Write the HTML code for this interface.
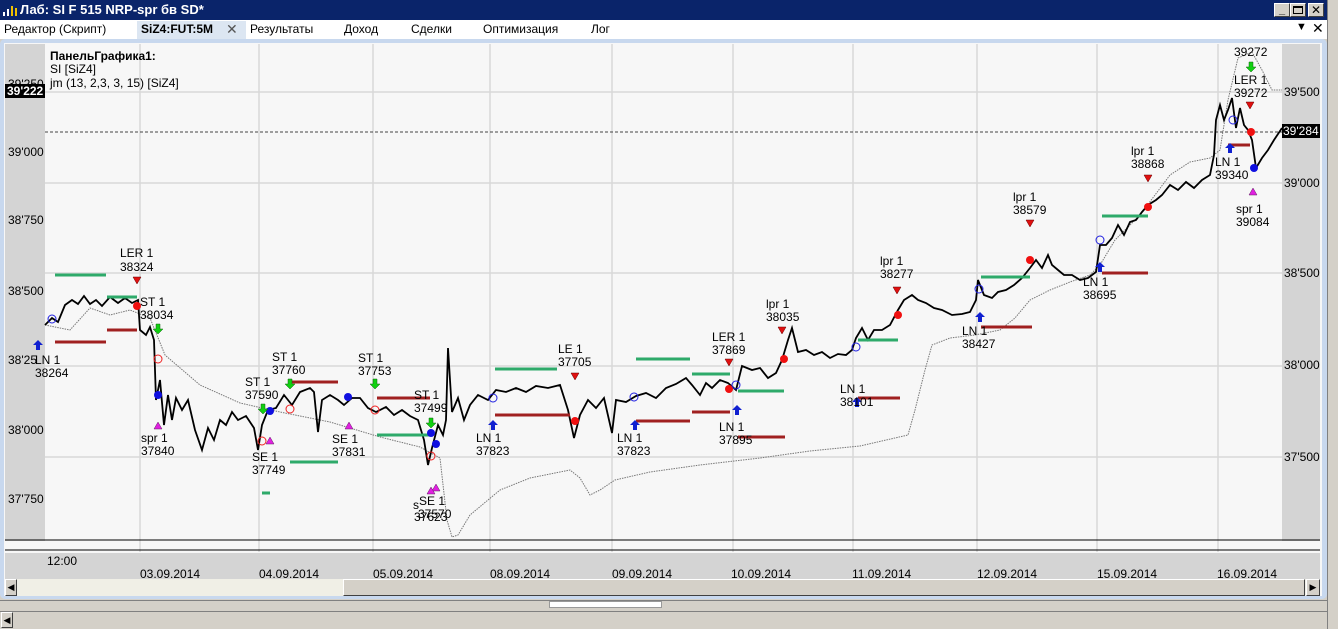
<!DOCTYPE html>
<html><head><meta charset="utf-8"><style>
*{margin:0;padding:0;box-sizing:border-box}
body{width:1338px;height:629px;overflow:hidden;background:#d4d0c8;font-family:"Liberation Sans","DejaVu Sans",sans-serif;font-size:12px;position:relative}
.ab{position:absolute}
</style></head><body>
<div class="ab" style="left:0;top:0;width:1338px;height:20px;background:#0a246a"></div>
<div class="ab" style="left:2px;top:3px;width:16px;height:14px">
<div class="ab" style="left:1px;top:9px;width:2px;height:4px;background:#fff"></div>
<div class="ab" style="left:5px;top:6px;width:2px;height:7px;background:#fff"></div>
<div class="ab" style="left:9px;top:3px;width:2px;height:10px;background:#f0c000"></div>
<div class="ab" style="left:13px;top:5px;width:2px;height:8px;background:#f0c000"></div></div>
<div class="ab" style="left:20px;top:2px;color:#fff;font-weight:bold;font-size:13px">Лаб: SI F 515 NRP-spr бв SD*</div>
<div class="ab" style="left:1274px;top:3px;width:16px;height:14px;background:#d4d0c8;border:1px solid #fff;border-right-color:#404040;border-bottom-color:#404040;font-size:11px;font-weight:bold;text-align:center;line-height:12px">_</div>
<div class="ab" style="left:1290px;top:3px;width:16px;height:14px;background:#d4d0c8;border:1px solid #fff;border-right-color:#404040;border-bottom-color:#404040"><div class="ab" style="left:2px;top:2px;width:10px;height:8px;border:1px solid #000;border-top-width:2px"></div></div>
<div class="ab" style="left:1308px;top:3px;width:16px;height:14px;background:#d4d0c8;border:1px solid #fff;border-right-color:#404040;border-bottom-color:#404040;font-size:12px;font-weight:bold;text-align:center;line-height:12px">✕</div>
<div class="ab" style="left:1327px;top:0;width:11px;height:629px;background:#d4d0c8;border-left:1px solid #808080"></div>
<div class="ab" style="left:0;top:20px;width:1327px;height:19px;background:#fff"></div>
<div class="ab" style="left:137px;top:21px;width:109px;height:18px;background:#dce6f2"></div>
<div class="ab" style="left:4px;top:22px;color:#000">Редактор (Скрипт)</div>
<div class="ab" style="left:141px;top:22px;font-weight:bold">SiZ4:FUT:5M</div>
<div class="ab" style="left:226px;top:21px;font-size:14px;color:#555">✕</div>
<div class="ab" style="left:250px;top:22px">Результаты</div>
<div class="ab" style="left:344px;top:22px">Доход</div>
<div class="ab" style="left:411px;top:22px">Сделки</div>
<div class="ab" style="left:483px;top:22px">Оптимизация</div>
<div class="ab" style="left:591px;top:22px">Лог</div>
<div class="ab" style="left:1296px;top:21px;font-size:11px">▼</div>
<div class="ab" style="left:1312px;top:20px;font-size:14px">✕</div>
<div class="ab" style="left:0;top:39px;width:1327px;height:560px;background:#c8d8ee;border-radius:5px"></div>
<div class="ab" style="left:4px;top:43px;width:1318px;height:553px;background:#f7f7f7"></div>
<svg class="ab" style="left:0;top:0" width="1338" height="629" font-family="Liberation Sans, sans-serif" font-size="12">
<rect x="5" y="44" width="40" height="497" fill="#d4d4d4"/>
<rect x="1282" y="44" width="38" height="497" fill="#d4d4d4"/>
<g stroke="#d8d8d8" stroke-width="1.5">
<line x1="45" y1="92" x2="1282" y2="92"/><line x1="45" y1="183" x2="1282" y2="183"/><line x1="45" y1="273" x2="1282" y2="273"/><line x1="45" y1="366" x2="1282" y2="366"/><line x1="45" y1="457" x2="1282" y2="457"/>
<line x1="140" y1="44" x2="140" y2="552"/><line x1="259" y1="44" x2="259" y2="552"/><line x1="373" y1="44" x2="373" y2="552"/><line x1="490" y1="44" x2="490" y2="552"/><line x1="612" y1="44" x2="612" y2="552"/><line x1="733" y1="44" x2="733" y2="552"/><line x1="853" y1="44" x2="853" y2="552"/><line x1="977" y1="44" x2="977" y2="552"/><line x1="1097" y1="44" x2="1097" y2="552"/><line x1="1218" y1="44" x2="1218" y2="552"/>
</g>
<line x1="45" y1="132" x2="1282" y2="132" stroke="#444" stroke-dasharray="3,2"/>
<line x1="5" y1="540" x2="1320" y2="540" stroke="#000"/>
<line x1="5" y1="550" x2="1320" y2="550" stroke="#000"/>
<rect x="5" y="553" width="1315" height="26" fill="#d4d4d4"/>
<g fill="#000">
<text x="8" y="88">39'250</text><text x="8" y="156">39'000</text><text x="8" y="224">38'750</text><text x="8" y="295">38'500</text><text x="8" y="364">38'25</text><text x="8" y="434">38'000</text><text x="8" y="503">37'750</text>
<text x="1284" y="96">39'500</text><text x="1284" y="187">39'000</text><text x="1284" y="277">38'500</text><text x="1284" y="369">38'000</text><text x="1284" y="461">37'500</text>
</g>
<rect x="5" y="84" width="40" height="14" fill="#000"/><text x="7" y="95" fill="#fff" font-weight="bold">39'222</text>
<rect x="1282" y="124" width="38" height="14" fill="#000"/><text x="1283" y="135" fill="#fff">39'284</text>
<text x="50" y="60" font-weight="bold">ПанельГрафика1:</text>
<text x="50" y="73">SI [SiZ4]</text>
<text x="50" y="87">jm (13, 2,3, 3, 15) [SiZ4]</text>
<polyline fill="none" stroke="#777" stroke-dasharray="1.5,1" points="45,325 70,330 90,308 110,315 130,310 150,318 165,355 200,385 240,403 280,412 330,422 380,437 420,447 440,458 447,520 452,537 458,535 470,515 500,490 530,478 570,470 580,478 590,495 600,490 615,480 650,472 700,465 760,458 810,451 860,446 908,435 915,410 925,370 932,345 950,338 975,335 1000,330 1015,318 1030,300 1050,290 1070,282 1090,275 1100,265 1115,240 1140,215 1170,175 1190,162 1210,158 1220,150 1228,100 1238,58 1252,52 1262,70 1272,90 1282,90"/>
<polyline fill="none" stroke="#000" stroke-width="1.8" points="45,325 52,318 58,322 65,305 72,300 78,304 84,296 90,304 96,300 102,306 110,297 118,303 125,298 132,303 138,300 140,330 146,335 150,327 154,340 156,400 160,380 164,425 168,395 172,420 176,398 182,410 188,400 195,430 202,450 208,428 214,440 220,420 226,425 232,412 238,420 246,416 254,428 258,450 262,425 268,410 276,408 284,395 292,405 300,392 310,388 314,392 318,432 322,400 330,395 338,400 344,405 352,398 360,398 368,408 376,412 386,407 394,415 402,410 410,416 418,420 424,440 428,465 432,448 438,425 443,435 446,420 448,348 452,412 458,398 464,420 470,405 478,395 488,400 496,390 506,392 516,388 526,392 536,386 548,388 560,385 568,410 574,438 580,415 588,400 596,408 604,398 612,433 616,400 626,402 636,396 646,393 656,398 666,388 676,384 686,378 692,385 700,395 706,383 712,388 720,380 728,383 736,390 742,366 752,370 760,368 768,378 776,373 782,360 788,340 792,328 798,352 806,350 814,355 822,352 830,358 838,354 846,355 852,350 856,338 862,328 868,340 874,330 882,330 890,325 898,310 904,300 912,295 918,300 926,303 934,308 942,310 952,315 962,314 970,312 976,300 978,280 984,295 992,298 998,292 1006,290 1014,285 1022,278 1030,268 1036,260 1042,268 1048,255 1052,265 1058,270 1064,275 1072,275 1080,280 1088,278 1096,272 1100,245 1106,245 1112,238 1118,225 1124,235 1130,222 1136,220 1142,212 1148,205 1156,200 1162,195 1170,185 1178,190 1186,182 1194,188 1202,180 1210,175 1214,155 1216,120 1220,105 1224,120 1228,110 1232,98 1236,128 1240,108 1244,125 1248,130 1252,140 1256,168 1262,158 1268,150 1274,140 1282,128"/>
<g stroke-width="3">
<g stroke="#2eaa6a"><line x1="55" y1="275" x2="106" y2="275"/><line x1="107" y1="297" x2="137" y2="297"/><line x1="290" y1="462" x2="338" y2="462"/><line x1="262" y1="493" x2="270" y2="493"/><line x1="377" y1="435" x2="430" y2="435"/><line x1="495" y1="369" x2="557" y2="369"/><line x1="636" y1="359" x2="690" y2="359"/><line x1="692" y1="374" x2="730" y2="374"/><line x1="738" y1="391" x2="784" y2="391"/><line x1="858" y1="340" x2="898" y2="340"/><line x1="981" y1="277" x2="1030" y2="277"/><line x1="1102" y1="216" x2="1148" y2="216"/></g>
<g stroke="#a02020"><line x1="55" y1="342" x2="106" y2="342"/><line x1="107" y1="330" x2="137" y2="330"/><line x1="290" y1="382" x2="338" y2="382"/><line x1="377" y1="398" x2="430" y2="398"/><line x1="495" y1="415" x2="570" y2="415"/><line x1="636" y1="421" x2="690" y2="421"/><line x1="692" y1="412" x2="730" y2="412"/><line x1="738" y1="437" x2="785" y2="437"/><line x1="858" y1="398" x2="900" y2="398"/><line x1="981" y1="327" x2="1032" y2="327"/><line x1="1102" y1="273" x2="1148" y2="273"/><line x1="1228" y1="145" x2="1250" y2="145"/></g>
</g>
<g fill="#1010e0"><circle cx="158" cy="395" r="4"/><circle cx="270" cy="411" r="4"/><circle cx="348" cy="397" r="4"/><circle cx="431" cy="433" r="4"/><circle cx="436" cy="444" r="4"/><circle cx="1254" cy="168" r="4"/></g>
<g fill="#f01010"><circle cx="137" cy="306" r="4"/><circle cx="575" cy="421" r="4"/><circle cx="729" cy="389" r="4"/><circle cx="784" cy="359" r="4"/><circle cx="898" cy="315" r="4"/><circle cx="1030" cy="260" r="4"/><circle cx="1148" cy="207" r="4"/><circle cx="1251" cy="132" r="4"/></g>
<g fill="none" stroke="#2020e0"><circle cx="52" cy="319" r="4"/><circle cx="493" cy="398" r="4"/><circle cx="634" cy="397" r="4"/><circle cx="736" cy="385" r="4"/><circle cx="856" cy="347" r="4"/><circle cx="979" cy="289" r="4"/><circle cx="1100" cy="240" r="4"/><circle cx="1233" cy="120" r="4"/></g>
<g fill="none" stroke="#f02020"><circle cx="158" cy="359" r="4"/><circle cx="290" cy="409" r="4"/><circle cx="375" cy="410" r="4"/><circle cx="262" cy="441" r="4"/><circle cx="431" cy="456" r="4"/></g>
<g fill="#1020d0"><path id="ua" d="M38,340 l5,5 h-3 v5 h-4 v-5 h-3z"/></g>
<g fill="#1020d0">
<use href="#ua" transform="translate(455,80)"/><use href="#ua" transform="translate(597,80)"/><use href="#ua" transform="translate(699,65)"/><use href="#ua" transform="translate(819,57)"/><use href="#ua" transform="translate(942,-28)"/><use href="#ua" transform="translate(1062,-78)"/><use href="#ua" transform="translate(1192,-197)"/></g>
<g fill="#10d010" stroke="#106010" stroke-width="0.5"><path id="da" d="M156,324 h4 v5 h3 l-5,5 l-5,-5 h3z"/>
<use href="#da" transform="translate(105,80)"/><use href="#da" transform="translate(132,55)"/><use href="#da" transform="translate(217,55)"/><use href="#da" transform="translate(273,94)"/><use href="#da" transform="translate(1093,-262)"/></g>
<g fill="#e01010" stroke="#600" stroke-width="0.5"><path id="rt" d="M133,277 h8 l-4,7z"/>
<use href="#rt" transform="translate(438,96)"/><use href="#rt" transform="translate(592,82)"/><use href="#rt" transform="translate(645,50)"/><use href="#rt" transform="translate(760,10)"/><use href="#rt" transform="translate(893,-57)"/><use href="#rt" transform="translate(1011,-102)"/><use href="#rt" transform="translate(1113,-175)"/></g>
<g fill="#e020e0" stroke="#602060" stroke-width="0.5"><path id="mt" d="M158,422 l4,7 h-8z"/>
<use href="#mt" transform="translate(112,15)"/><use href="#mt" transform="translate(191,0)"/><use href="#mt" transform="translate(278,62)"/><use href="#mt" transform="translate(273,65)"/><use href="#mt" transform="translate(1095,-234)"/></g>
<g fill="#000">
<text x="120" y="257">LER 1</text><text x="120" y="271">38324</text>
<text x="140" y="306">ST 1</text><text x="140" y="319">38034</text>
<text x="35" y="364">LN 1</text><text x="35" y="377">38264</text>
<text x="141" y="442">spr 1</text><text x="141" y="455">37840</text>
<text x="245" y="386">ST 1</text><text x="245" y="399">37590</text>
<text x="272" y="361">ST 1</text><text x="272" y="374">37760</text>
<text x="252" y="461">SE 1</text><text x="252" y="474">37749</text>
<text x="332" y="443">SE 1</text><text x="332" y="456">37831</text>
<text x="358" y="362">ST 1</text><text x="358" y="375">37753</text>
<text x="414" y="399">ST 1</text><text x="414" y="412">37499</text>
<text x="413" y="509">s</text><text x="414" y="521">37623</text>
<text x="419" y="505">SE 1</text><text x="418" y="518">37570</text>
<text x="476" y="442">LN 1</text><text x="476" y="455">37823</text>
<text x="558" y="353">LE 1</text><text x="558" y="366">37705</text>
<text x="617" y="442">LN 1</text><text x="617" y="455">37823</text>
<text x="712" y="341">LER 1</text><text x="712" y="354">37869</text>
<text x="719" y="431">LN 1</text><text x="719" y="444">37895</text>
<text x="766" y="308">lpr 1</text><text x="766" y="321">38035</text>
<text x="840" y="393">LN 1</text><text x="840" y="406">38101</text>
<text x="880" y="265">lpr 1</text><text x="880" y="278">38277</text>
<text x="1013" y="201">lpr 1</text><text x="1013" y="214">38579</text>
<text x="962" y="335">LN 1</text><text x="962" y="348">38427</text>
<text x="1083" y="286">LN 1</text><text x="1083" y="299">38695</text>
<text x="1131" y="155">lpr 1</text><text x="1131" y="168">38868</text>
<text x="1215" y="166">LN 1</text><text x="1215" y="179">39340</text>
<text x="1236" y="213">spr 1</text><text x="1236" y="226">39084</text>
<text x="1234" y="56">39272</text>
<text x="1234" y="84">LER 1</text><text x="1234" y="97">39272</text>
<text x="47" y="565">12:00</text>
<text x="140" y="578">03.09.2014</text><text x="259" y="578">04.09.2014</text><text x="373" y="578">05.09.2014</text><text x="490" y="578">08.09.2014</text><text x="612" y="578">09.09.2014</text><text x="731" y="578">10.09.2014</text><text x="852" y="578">11.09.2014</text><text x="977" y="578">12.09.2014</text><text x="1097" y="578">15.09.2014</text><text x="1217" y="578">16.09.2014</text>
</g>
</svg>
<div class="ab" style="left:5px;top:579px;width:1315px;height:17px;background:#f0efe6"></div>
<div class="ab" style="left:5px;top:579px;width:12px;height:17px;background:#d4d0c8;border:1px solid #fff;border-right-color:#404040;border-bottom-color:#404040;font-size:9px;line-height:14px;text-align:center">◀</div>
<div class="ab" style="left:343px;top:579px;width:962px;height:17px;background:#d4d0c8;border:1px solid #fff;border-right-color:#404040;border-bottom-color:#404040"></div>
<div class="ab" style="left:1306px;top:579px;width:14px;height:17px;background:#d4d0c8;border:1px solid #fff;border-right-color:#404040;border-bottom-color:#404040;font-size:9px;line-height:14px;text-align:center">▶</div>
<div class="ab" style="left:0;top:600px;width:1327px;height:29px;background:#d4d0c8;border-top:1px solid #808080"></div>
<div class="ab" style="left:549px;top:601px;width:113px;height:7px;background:#fff;border:1px solid #999"></div>
<div class="ab" style="left:0;top:611px;width:1327px;height:18px;background:#d4d0c8;border-top:1px solid #808080"></div>
<div class="ab" style="left:1px;top:612px;width:12px;height:16px;border:1px solid #fff;border-right-color:#404040;border-bottom-color:#404040;font-size:9px;line-height:14px;text-align:center">◀</div>
</body></html>
